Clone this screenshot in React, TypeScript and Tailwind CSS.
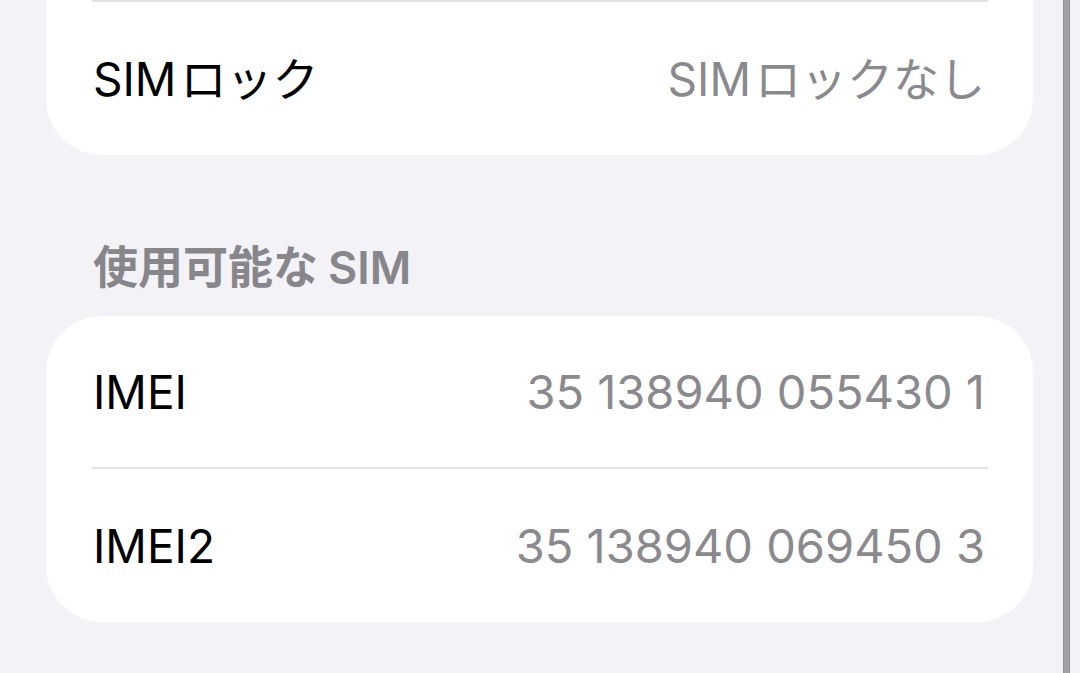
import React from "react";

const font = {
  fontFamily: '"Inter", "Noto Sans CJK JP", "Noto Sans", sans-serif',
};

// Latin prefix followed by Japanese, with the small gap iOS leaves between scripts
function Mixed({ latin, rest, gap }: { latin: string; rest: string; gap: string }) {
  return (
    <>
      <span className={gap}>{latin}</span>
      {rest}
    </>
  );
}

function Row({
  label,
  value,
  h,
}: {
  label: React.ReactNode;
  value: React.ReactNode;
  h: string;
}) {
  return (
    <div className={`flex items-center justify-between pl-[47px] pr-[48px] ${h}`}>
      <span className="text-[46px] leading-none text-black">{label}</span>
      <span className="text-[46px] leading-none text-[#8a8a8e]">{value}</span>
    </div>
  );
}

function Divider() {
  return <div className="h-[2px] ml-[46px] mr-[45px] bg-[#e3e3e7]" />;
}

export default function App() {
  return (
    <div className="w-[1080px] h-[673px] overflow-hidden bg-[#f2f2f7] flex" style={font}>
      <div className="w-[1063px] pl-[46px] pr-[30px] flex flex-col">
        {/* SIM lock card (scrolled, top edge out of view) */}
        <div className="bg-white rounded-b-[56px]">
          <Divider />
          <Row
            label={<Mixed latin="SIM" rest="ロック" gap="mr-[4px]" />}
            value={<Mixed latin="SIM" rest="ロックなし" gap="mr-[4px]" />}
            h="h-[153px]"
          />
        </div>

        {/* Section header */}
        <div className="h-[161px] pt-[88px] pl-[47px]">
          <span className="text-[45px] leading-[50px] font-semibold text-[#86868b]">
            使用可能な<span className="ml-[10px]">SIM</span>
          </span>
        </div>

        {/* IMEI card */}
        <div className="bg-white rounded-[56px]">
          <Row
            label="IMEI"
            value={<span className="text-[47px]">35 138940 055430 1</span>}
            h="h-[151px]"
          />
          <Divider />
          <Row
            label="IMEI2"
            value={<span className="text-[47px]">35 138940 069450 3</span>}
            h="h-[153px]"
          />
        </div>
      </div>

      {/* scroll indicator */}
      <div className="w-[7px] h-full bg-[#a0a0a5] border-x border-[#8e8e93]" />
      <div className="flex-1" />
    </div>
  );
}
